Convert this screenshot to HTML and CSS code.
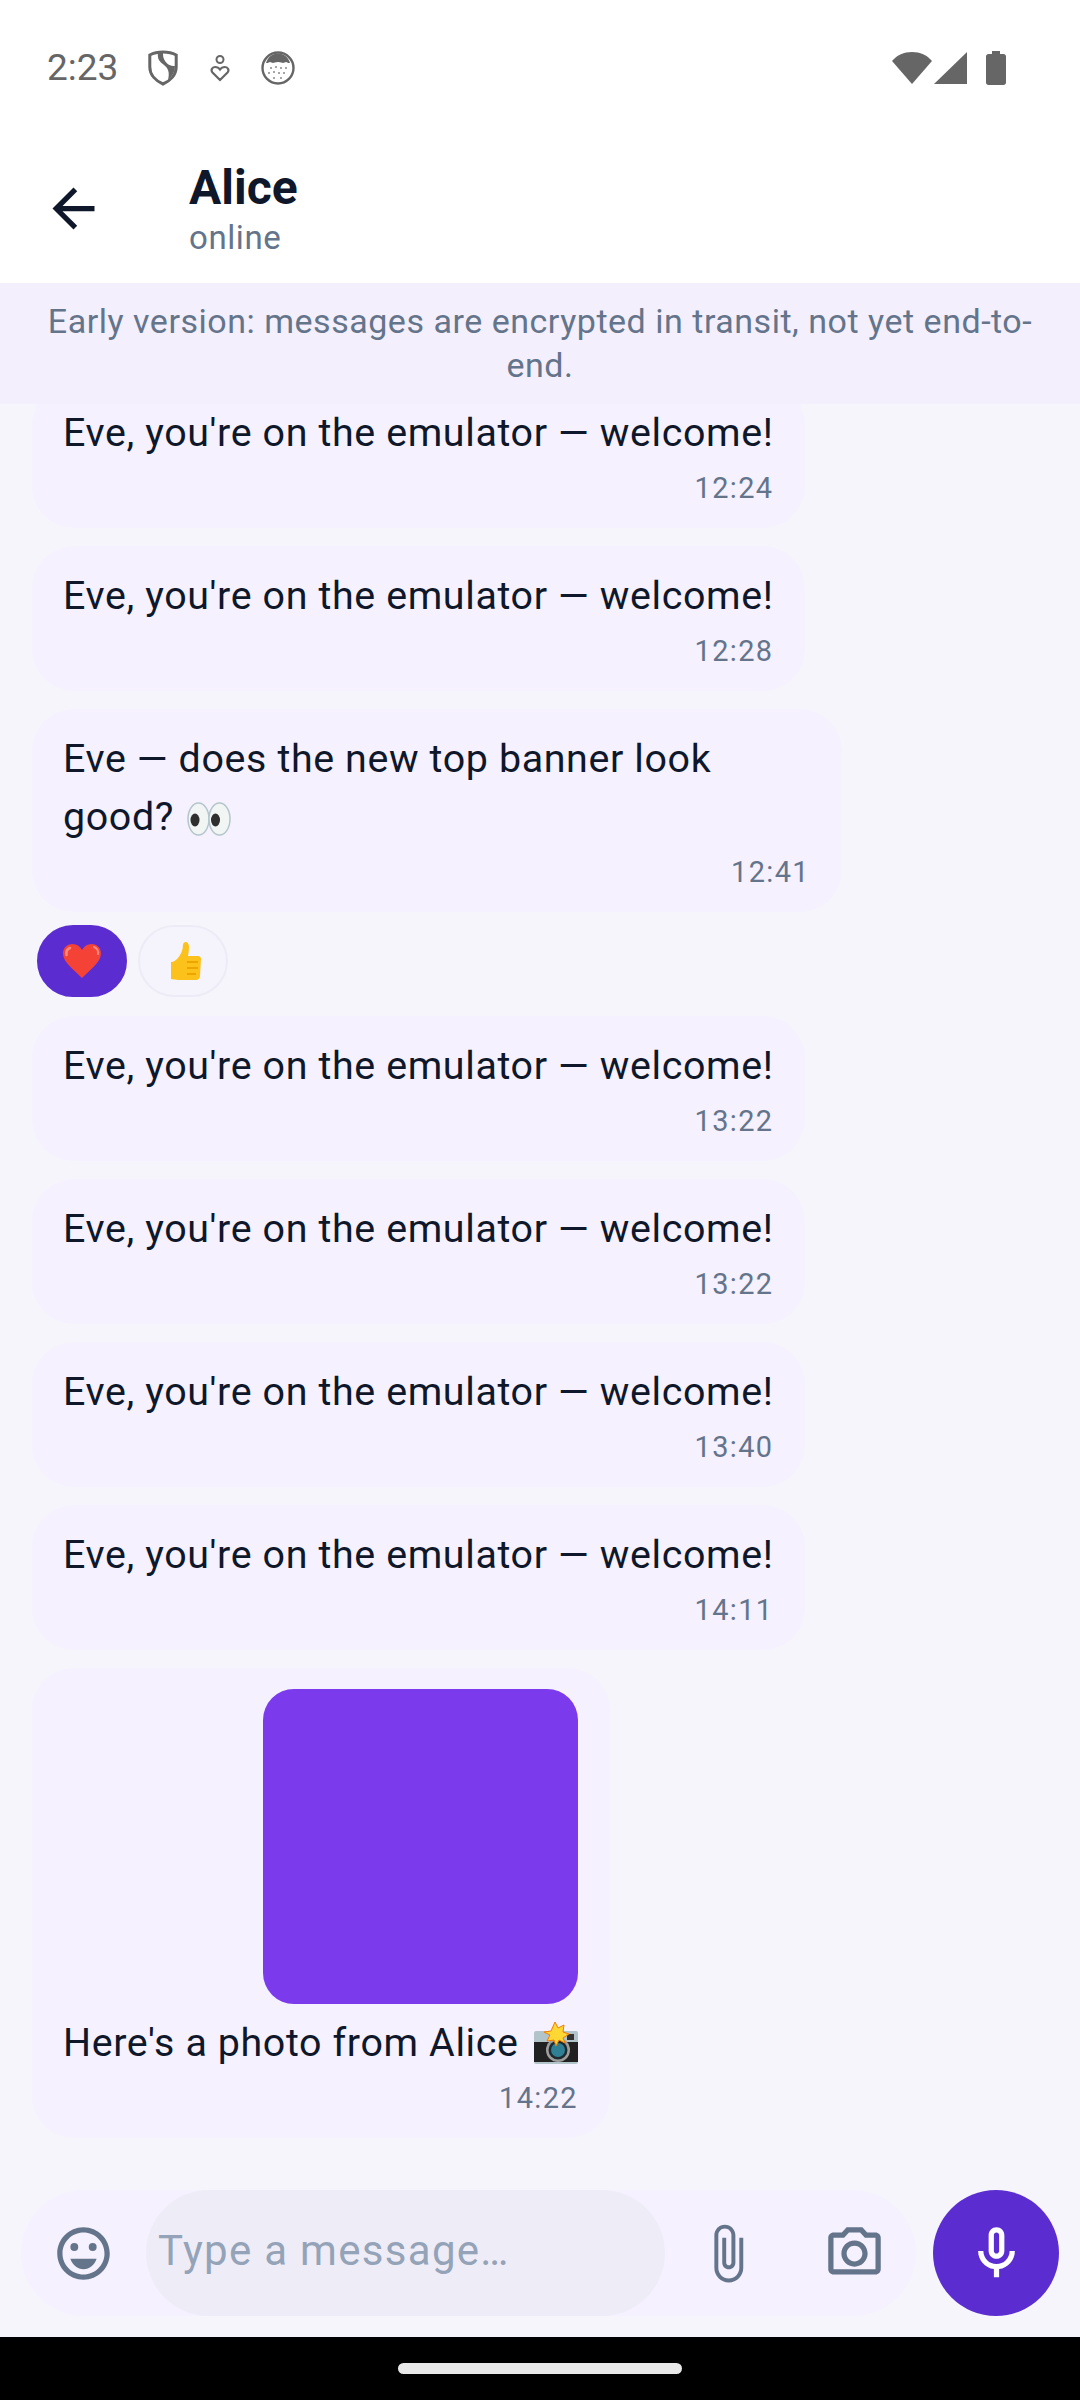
FILE: index.html
```html
<!DOCTYPE html>
<html lang="en">
<head>
    <meta charset="UTF-8">
    <title>Alice</title>
    <link rel="stylesheet" href="styles.css">
</head>
<body>
<div class="app">
    <div class="status">
        <span class="status-time">2:23</span>
        <svg class="st-shield" viewBox="0 0 30 36"><path d="M15 2C10 2 5.500 3 1.800 5V17c0 8 6.200 14 13.200 17C22 31 28.200 25 28.200 17V5C24.500 3 20 2 15 2z" fill="none" stroke="#666" stroke-width="3"/><path d="M10 3c-1 6 2 9 6 12s6 7 4 15l2-2c3-3 5-7 5-12-5 0-8-2-10-5s-2-6-2-8z" fill="#666"/></svg>
        <svg class="st-person" viewBox="0 0 20 28"><circle cx="10" cy="5.500" r="3.500" fill="none" stroke="#666" stroke-width="2"/><path d="M10 26l-7.500-7.500c-2-2.200-.5-5.500 2.500-5.500 2 0 4 1 5 2.500 1-1.500 3-2.500 5-2.500 3 0 4.500 3.300 2.500 5.500z" fill="none" stroke="#666" stroke-width="2.200"/></svg>
        <svg class="st-face" viewBox="0 0 34 34"><circle cx="17" cy="17" r="15.500" fill="#fff" stroke="#666" stroke-width="2.400"/><path d="M5 12C7 6 11 2.500 17 2.500S27 6 29 12c-2 .5-3-1-4-1s-2 1-3 1-2-1-5-1-4 1-5 1-2-1-3-1-2 1.500-4 1z" fill="#666"/><g fill="#888"><circle cx="10" cy="17" r="1"/><circle cx="15" cy="16" r="1"/><circle cx="20" cy="17" r="1"/><circle cx="25" cy="17" r="1"/><circle cx="8" cy="22" r="1"/><circle cx="13" cy="21" r="1"/><circle cx="18" cy="22" r="1"/><circle cx="23" cy="22" r="1"/><circle cx="13" cy="27" r="1"/><circle cx="20" cy="27" r="1"/></g></svg>
        <span class="status-gap"></span>
        <svg class="st-wifi" viewBox="0 0 40 32"><path d="M20 32L0 9C5 3 12 0 20 0s15 3 20 9z" fill="#666"/></svg>
        <svg class="st-signal" viewBox="0 0 33 32"><path d="M33 0v32H0z" fill="#666"/></svg>
        <svg class="st-battery" viewBox="0 0 20 34"><path d="M6 0h8v3h3.500c1.400 0 2.500 1.100 2.500 2.500V31.500c0 1.400-1.100 2.500-2.500 2.500h-15C1.100 34 0 32.900 0 31.500V5.500C0 4.100 1.100 3 2.500 3H6z" fill="#666"/></svg>
    </div>

    <div class="header">
        <svg class="back" viewBox="0 0 24 24"><path d="M20 11H7.830l5.590-5.590L12 4l-8 8 8 8 1.410-1.410L7.830 13H20v-2z"/></svg>
        <div class="title">
            <div class="title-name">Alice</div>
            <div class="title-sub">online</div>
        </div>
    </div>

    <div class="banner">Early version: messages are encrypted in transit, not yet end-to-end.</div>

    <div class="messages">
        <div class="bubble first">
            <div class="text">Eve, you're on the emulator — welcome!</div>
            <div class="time">12:24</div>
        </div>
        <div class="bubble">
            <div class="text">Eve, you're on the emulator — welcome!</div>
            <div class="time">12:28</div>
        </div>
        <div class="bubble">
            <div class="text">Eve — does the new top banner look good? <svg class="emoji eyes" viewBox="0 0 44 34"><ellipse cx="11.500" cy="17" rx="10.500" ry="16" fill="#f1f5f4" stroke="#b4c6cc" stroke-width="1.500"/><ellipse cx="32.500" cy="17" rx="10.500" ry="16" fill="#f1f5f4" stroke="#b4c6cc" stroke-width="1.500"/><ellipse cx="8" cy="18" rx="4.500" ry="6.500" fill="#2f2f2f"/><ellipse cx="28.500" cy="18" rx="4.500" ry="6.500" fill="#2f2f2f"/></svg></div>
            <div class="time">12:41</div>
        </div>
        <div class="reactions">
            <div class="react active"><svg class="heart" viewBox="0 0 38 34"><path d="M19 34C10 25 0 18 0 9.500 0 4 4 0 9.500 0 13.500 0 17 2 19 6c2-4 5.500-6 9.500-6C34 0 38 4 38 9.500 38 18 28 25 19 34z" fill="#f44336"/><path d="M7 4c-3 1-4 4-3.500 7" fill="none" stroke="#ff8a80" stroke-width="2.500" stroke-linecap="round"/><path d="M31 3c3 1 4.500 4 4 7" fill="none" stroke="#ff8a80" stroke-width="2" stroke-linecap="round"/></svg></div>
            <div class="react"><svg class="thumb" viewBox="0 0 36 38"><path d="M13 16c3-4 5-8 5-13 0-2 1.500-3 3-3s3 2 3 5c0 3-.5 6-1 9h10c2 0 3 1.500 3 3l-1 17c0 2-1.500 4-4 4H15c-5 0-9-1-9-1V20c3 0 5-2 7-4z" fill="#fcc21b"/><path d="M22 20h11M22 26h11M22 32h9" stroke="#eda600" stroke-width="1.800" fill="none"/></svg></div>
        </div>
        <div class="bubble">
            <div class="text">Eve, you're on the emulator — welcome!</div>
            <div class="time">13:22</div>
        </div>
        <div class="bubble">
            <div class="text">Eve, you're on the emulator — welcome!</div>
            <div class="time">13:22</div>
        </div>
        <div class="bubble">
            <div class="text">Eve, you're on the emulator — welcome!</div>
            <div class="time">13:40</div>
        </div>
        <div class="bubble">
            <div class="text">Eve, you're on the emulator — welcome!</div>
            <div class="time">14:11</div>
        </div>
        <div class="bubble">
            <div class="photo"></div>
            <div class="text">Here's a photo from Alice <svg class="emoji flash" viewBox="0 0 44 42"><rect x="0" y="9" width="44" height="33" rx="2" fill="#b0c4c9"/><rect x="0" y="20" width="44" height="20" fill="#212121"/><circle cx="24" cy="28" r="12" fill="#9e9e9e"/><circle cx="24" cy="28" r="9.500" fill="#1f2a2e"/><circle cx="24" cy="28" r="7" fill="#2f7f95"/><rect x="33" y="12" width="7" height="6" fill="#333"/><path d="M21 0l3 6 6-3-1 7 6 2-6 4 2 5-6-3-3 6-2-6-7 1 3-6-6-3 7-1z" fill="#fdd835" stroke="#f57c00" stroke-width="1"/></svg></div>
            <div class="time">14:22</div>
        </div>
    </div>

    <div class="composer">
        <div class="composer-pill">
            <span class="tool smile">
                <svg viewBox="0 0 24 24"><path d="M11.990 2C6.470 2 2 6.480 2 12s4.470 10 9.990 10C17.520 22 22 17.520 22 12S17.520 2 11.990 2zM12 20c-4.420 0-8-3.580-8-8s3.580-8 8-8 8 3.580 8 8-3.580 8-8 8z"/><circle cx="15.500" cy="9.500" r="1.500"/><circle cx="8.500" cy="9.500" r="1.500"/><path d="M7 14c.78 2.340 2.720 4 5 4s4.220-1.660 5-4H7z"/></svg>
            </span>
            <div class="input">Type a message…</div>
            <span class="tool clip">
                <svg viewBox="0 0 24 24"><path d="M16.500 6v11.500c0 2.210-1.790 4-4 4s-4-1.790-4-4V5c0-1.380 1.120-2.500 2.500-2.500s2.500 1.120 2.500 2.500v10.500c0 .55-.45 1-1 1s-1-.45-1-1V6H10v9.500c0 1.380 1.120 2.500 2.500 2.500s2.500-1.120 2.500-2.500V5c0-2.210-1.790-4-4-4S7 2.790 7 5v12.500c0 3.040 2.460 5.500 5.500 5.500s5.500-2.460 5.500-5.500V6h-1.500z"/></svg>
            </span>
            <span class="tool cam">
                <svg viewBox="0 0 24 24"><path d="M20 4h-3.170L15 2H9L7.170 4H4c-1.100 0-2 .9-2 2v12c0 1.100.9 2 2 2h16c1.100 0 2-.9 2-2V6c0-1.100-.9-2-2-2zm0 14H4V6h4.050l1.830-2h4.240l1.830 2H20v12zM12 7c-2.760 0-5 2.240-5 5s2.240 5 5 5 5-2.240 5-5-2.240-5-5-5zm0 8c-1.650 0-3-1.350-3-3s1.350-3 3-3 3 1.350 3 3-1.350 3-3 3z"/></svg>
            </span>
        </div>
        <div class="mic">
            <svg viewBox="0 0 24 24"><path d="M12 14c1.660 0 3-1.340 3-3V5c0-1.660-1.340-3-3-3S9 3.340 9 5v6c0 1.660 1.340 3 3 3zm-1-9c0-.55.45-1 1-1s1 .45 1 1v6c0 .55-.45 1-1 1s-1-.45-1-1V5zm6 6c0 2.760-2.240 5-5 5s-5-2.240-5-5H5c0 3.530 2.610 6.430 6 6.920V21h2v-3.080c3.390-.49 6-3.390 6-6.920h-2z"/></svg>
        </div>
    </div>

    <div class="navbar"><span class="home"></span></div>
</div>
</body>
</html>
```

FILE: styles.css
```css
* {
    box-sizing: border-box;
}

body {
    margin: 0;
    font-family: Roboto, "Noto Sans", sans-serif;
    background: #f6f5fc;
}

.app {
    width: 1080px;
    height: 2400px;
    display: flex;
    flex-direction: column;
    overflow: hidden;
}

/* status bar */
.status {
    height: 120px;
    flex: none;
    background: #fff;
    display: flex;
    align-items: center;
    padding: 16px 74px 0 47px;
}

.status-time {
    font-size: 37px;
    color: #666;
    width: 101px;
    line-height: 40px;
}

.status-gap {
    flex: 1;
}

.st-shield {
    width: 30px;
    height: 36px;
}

.st-person {
    width: 20px;
    height: 28px;
    margin-left: 32px;
}

.st-face {
    width: 34px;
    height: 34px;
    margin-left: 31px;
}

.st-wifi {
    width: 40px;
    height: 32px;
}

.st-signal {
    width: 33px;
    height: 32px;
    margin-left: 2px;
}

.st-battery {
    width: 20px;
    height: 34px;
    margin-left: 19px;
}

/* header */
.header {
    height: 163px;
    flex: none;
    background: #fff;
    display: flex;
    align-items: center;
    padding: 13px 0 0 42px;
}

.back {
    width: 63px;
    height: 63px;
    fill: #0f172a;
    margin-right: 84px;
}

.title-name {
    font-size: 48px;
    font-weight: 700;
    color: #0f172a;
    line-height: 56px;
}

.title-sub {
    font-size: 33px;
    letter-spacing: 0.6px;
    color: #64748b;
    line-height: 38px;
    margin-top: 3px;
}

.banner {
    flex: none;
    height: 121px;
    background: #f3effd;
    color: #64748b;
    font-size: 34px;
    letter-spacing: 0.52px;
    line-height: 44px;
    text-align: center;
    padding: 16px 42px 0;
}

/* messages */
.messages {
    flex: 1;
    min-height: 0;
    overflow: hidden;
    display: flex;
    flex-direction: column;
    align-items: flex-start;
    gap: 18px;
    padding: 0 32px;
}

.bubble {
    flex: none;
    max-width: 810px;
    background: #f5f1fe;
    border-radius: 42px;
    padding: 21px 32px 21px 31px;
    display: flex;
    flex-direction: column;
}

.first {
    margin-top: -21px;
}

.text {
    font-size: 39.400px;
    letter-spacing: 0.62px;
    line-height: 58px;
    color: #0f172a;
}

.time {
    align-self: flex-end;
    font-size: 28.900px;
    letter-spacing: 1.400px;
    line-height: 40px;
    padding-top: 6px;
    margin-bottom: -1px;
    color: #64748b;
}

.emoji {
    display: inline-block;
    vertical-align: -6px;
    margin-left: 3px;
}

.eyes {
    width: 44px;
    height: 34px;
}

.flash {
    width: 44px;
    height: 42px;
    vertical-align: -8px;
    margin-left: 5px;
}

.photo {
    width: 315px;
    height: 315px;
    align-self: flex-end;
    background: #7c3aed;
    border-radius: 31px;
    margin-bottom: 10px;
}

.reactions {
    flex: none;
    display: flex;
    gap: 11px;
    padding-left: 5px;
    margin: -5px 0 1px;
}

.react {
    width: 90px;
    height: 72px;
    border-radius: 36px;
    border: 2px solid #edecf6;
    background: #f5f3fc;
    display: flex;
    align-items: center;
    justify-content: center;
}

.react.active {
    background: #5b2dd0;
    border-color: #5b2dd0;
}

.heart {
    width: 38px;
    height: 34px;
}

.thumb {
    width: 36px;
    height: 38px;
}

/* composer */
.composer {
    flex: none;
    display: flex;
    align-items: center;
    gap: 17px;
    padding: 0 21px 21px;
}

.composer-pill {
    width: 895px;
    height: 126px;
    background: #f5f1fe;
    border-radius: 63px;
    display: flex;
    align-items: center;
}

.tool {
    display: flex;
    fill: #64748b;
}

.tool svg {
    width: 63px;
    height: 63px;
}

.smile {
    margin-left: 31px;
    margin-right: 31px;
}

.input {
    width: 519px;
    height: 126px;
    background: #eeedf7;
    border-radius: 63px;
    padding-left: 12px;
    font-size: 42px;
    line-height: 122px;
    letter-spacing: 1.300px;
    color: #94a3b8;
}

.clip {
    margin-left: 31px;
}

.cam {
    margin-left: 64px;
}

.mic {
    width: 126px;
    height: 126px;
    border-radius: 50%;
    background: #5b2dd0;
    fill: #fff;
    display: flex;
    align-items: center;
    justify-content: center;
}

.mic svg {
    width: 63px;
    height: 63px;
}

/* nav bar */
.navbar {
    flex: none;
    height: 63px;
    background: #000;
    display: flex;
    justify-content: center;
    padding-top: 26px;
}

.home {
    width: 284px;
    height: 11px;
    border-radius: 6px;
    background: #e8e8e8;
}
```
